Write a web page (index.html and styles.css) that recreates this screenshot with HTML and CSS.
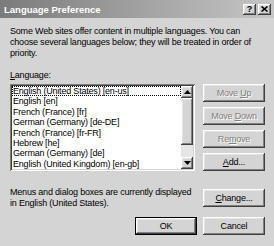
FILE: index.html
```html
<!DOCTYPE html>
<html lang="en">
<head>
    <meta charset="UTF-8">
    <meta name="viewport" content="width=device-width, initial-scale=1.0">
    <title>Language Preference</title>
    <link rel="stylesheet" href="styles.css">
</head>
<body>

    <div class="dialog">
        <div class="title-bar">
            <span class="title-text">Language Preference</span>
            <div class="title-buttons">
                <span class="title-button">?</span>
                <span class="title-button">
                    <svg width="7" height="6" viewBox="0 0 7 6">
                        <path d="M0.5 0.5 L6.5 5.5 M6.5 0.5 L0.5 5.5" stroke="#000" stroke-width="1.6" fill="none"/>
                    </svg>
                </span>
            </div>
        </div>

        <div class="dialog-body">
            <p class="intro">Some Web sites offer content in multiple languages. You can<br>choose several languages below; they will be treated in order of<br>priority.</p>

            <div class="field-label"><u>L</u>anguage:</div>
            <div class="list-row">
                <div class="list-box">
                    <ul class="language-list">
                        <li class="focused">English (United States) [en-us]</li>
                        <li>English [en]</li>
                        <li>French (France) [fr]</li>
                        <li>German (Germany) [de-DE]</li>
                        <li>French (France) [fr-FR]</li>
                        <li>Hebrew [he]</li>
                        <li>German (Germany) [de]</li>
                        <li>English (United Kingdom) [en-gb]</li>
                    </ul>
                    <div class="scrollbar">
                        <div class="scroll-arrow">
                            <svg width="7" height="4" viewBox="0 0 7 4"><polygon points="3.5,0 7,4 0,4" fill="#000"/></svg>
                        </div>
                        <div class="scroll-thumb"></div>
                        <div class="scroll-track"></div>
                        <div class="scroll-arrow">
                            <svg width="7" height="4" viewBox="0 0 7 4"><polygon points="0,0 7,0 3.5,4" fill="#000"/></svg>
                        </div>
                    </div>
                </div>
                <div class="side-buttons">
                    <button disabled>Move <u>U</u>p</button>
                    <button disabled>Move <u>D</u>own</button>
                    <button disabled>Re<u>m</u>ove</button>
                    <button><u>A</u>dd...</button>
                </div>
            </div>

            <div class="current-row">
                <p class="current-text">Menus and dialog boxes are currently displayed<br>in English (United States).</p>
                <button class="change-button"><u>C</u>hange...</button>
            </div>

            <div class="footer">
                <button class="default">OK</button>
                <button>Cancel</button>
            </div>
        </div>
    </div>

</body>
</html>
```

FILE: styles.css
```css
:root {
    --face-color: #d4d4d4;
    --light-color: #ffffff;
    --shadow-color: #808080;
    --dark-color: #404040;
    --text-color: #000000;
    --raised: inset -1px -1px var(--dark-color), inset 1px 1px var(--light-color), inset -2px -2px var(--shadow-color), inset 2px 2px #e4e4e4;
}

/* General Body Styles */
body {
    margin: 0;
    font-family: 'Liberation Sans', Arial, sans-serif;
    font-size: 9px;
    letter-spacing: -0.2px;
    color: var(--text-color);
}

.dialog {
    width: 274px;
    height: 246px;
    background-color: var(--face-color);
    overflow: hidden;
}

/* Title Bar */
.title-bar {
    height: 18px;
    display: flex;
    align-items: center;
    justify-content: space-between;
    padding: 0 3px 0 4px;
    background: linear-gradient(to right, #7b7b7b 0%, #c6c6c6 100%);
}

.title-text {
    color: #fff;
    font-weight: bold;
    font-size: 9.5px;
    letter-spacing: 0;
}

.title-buttons {
    display: flex;
    gap: 2px;
}

.title-button {
    width: 13px;
    height: 11px;
    display: flex;
    justify-content: center;
    align-items: center;
    background-color: var(--face-color);
    box-shadow: var(--raised);
    font-weight: bold;
    font-size: 9px;
    letter-spacing: 0;
}

/* Body */
.dialog-body {
    padding: 8px 9px 0 10px;
}

.intro {
    margin: 0;
    line-height: 11px;
    white-space: nowrap;
}

.field-label {
    margin-top: 10.5px;
    line-height: 11px;
}

/* Language List */
.list-row {
    display: flex;
    gap: 8px;
    margin-top: 3.5px;
}

.list-box {
    width: 185px;
    height: 87px;
    box-sizing: border-box;
    padding: 2px;
    display: flex;
    background-color: #fff;
    box-shadow: inset 1px 1px var(--shadow-color), inset -1px -1px var(--light-color), inset 2px 2px var(--dark-color), inset -2px -2px var(--face-color);
}

.language-list {
    flex: 1;
    list-style: none;
    margin: 0;
    padding: 0;
}

.language-list li {
    height: 10.375px;
    line-height: 10.375px;
    padding-left: 1px;
    white-space: nowrap;
}

.language-list li.focused {
    outline: 1px dotted #000;
    outline-offset: -1px;
}

.scrollbar {
    width: 12px;
    display: flex;
    flex-direction: column;
}

.scroll-arrow {
    height: 12px;
    display: flex;
    justify-content: center;
    align-items: center;
    background-color: var(--face-color);
    box-shadow: var(--raised);
}

.scroll-thumb {
    height: 47px;
    background-color: var(--face-color);
    box-shadow: var(--raised);
}

.scroll-track {
    flex: 1;
    background-color: #e6e6e6;
}

/* Buttons */
.side-buttons {
    display: flex;
    flex-direction: column;
    gap: 5px;
}

button {
    width: 62px;
    height: 18px;
    padding: 0;
    border: none;
    box-sizing: border-box;
    background-color: var(--face-color);
    box-shadow: var(--raised);
    font: inherit;
    letter-spacing: inherit;
    color: var(--text-color);
}

button:disabled {
    color: var(--shadow-color);
    text-shadow: 1px 1px var(--light-color);
}

button.default {
    border: 1px solid #000;
}

/* Current Language */
.current-row {
    display: flex;
    justify-content: space-between;
    align-items: flex-start;
    margin-top: 16px;
}

.current-text {
    margin: 0;
    line-height: 11px;
    white-space: nowrap;
}

.change-button {
    margin-top: 2px;
}

.footer {
    display: flex;
    justify-content: flex-end;
    gap: 6px;
    margin-top: 8px;
}
```
